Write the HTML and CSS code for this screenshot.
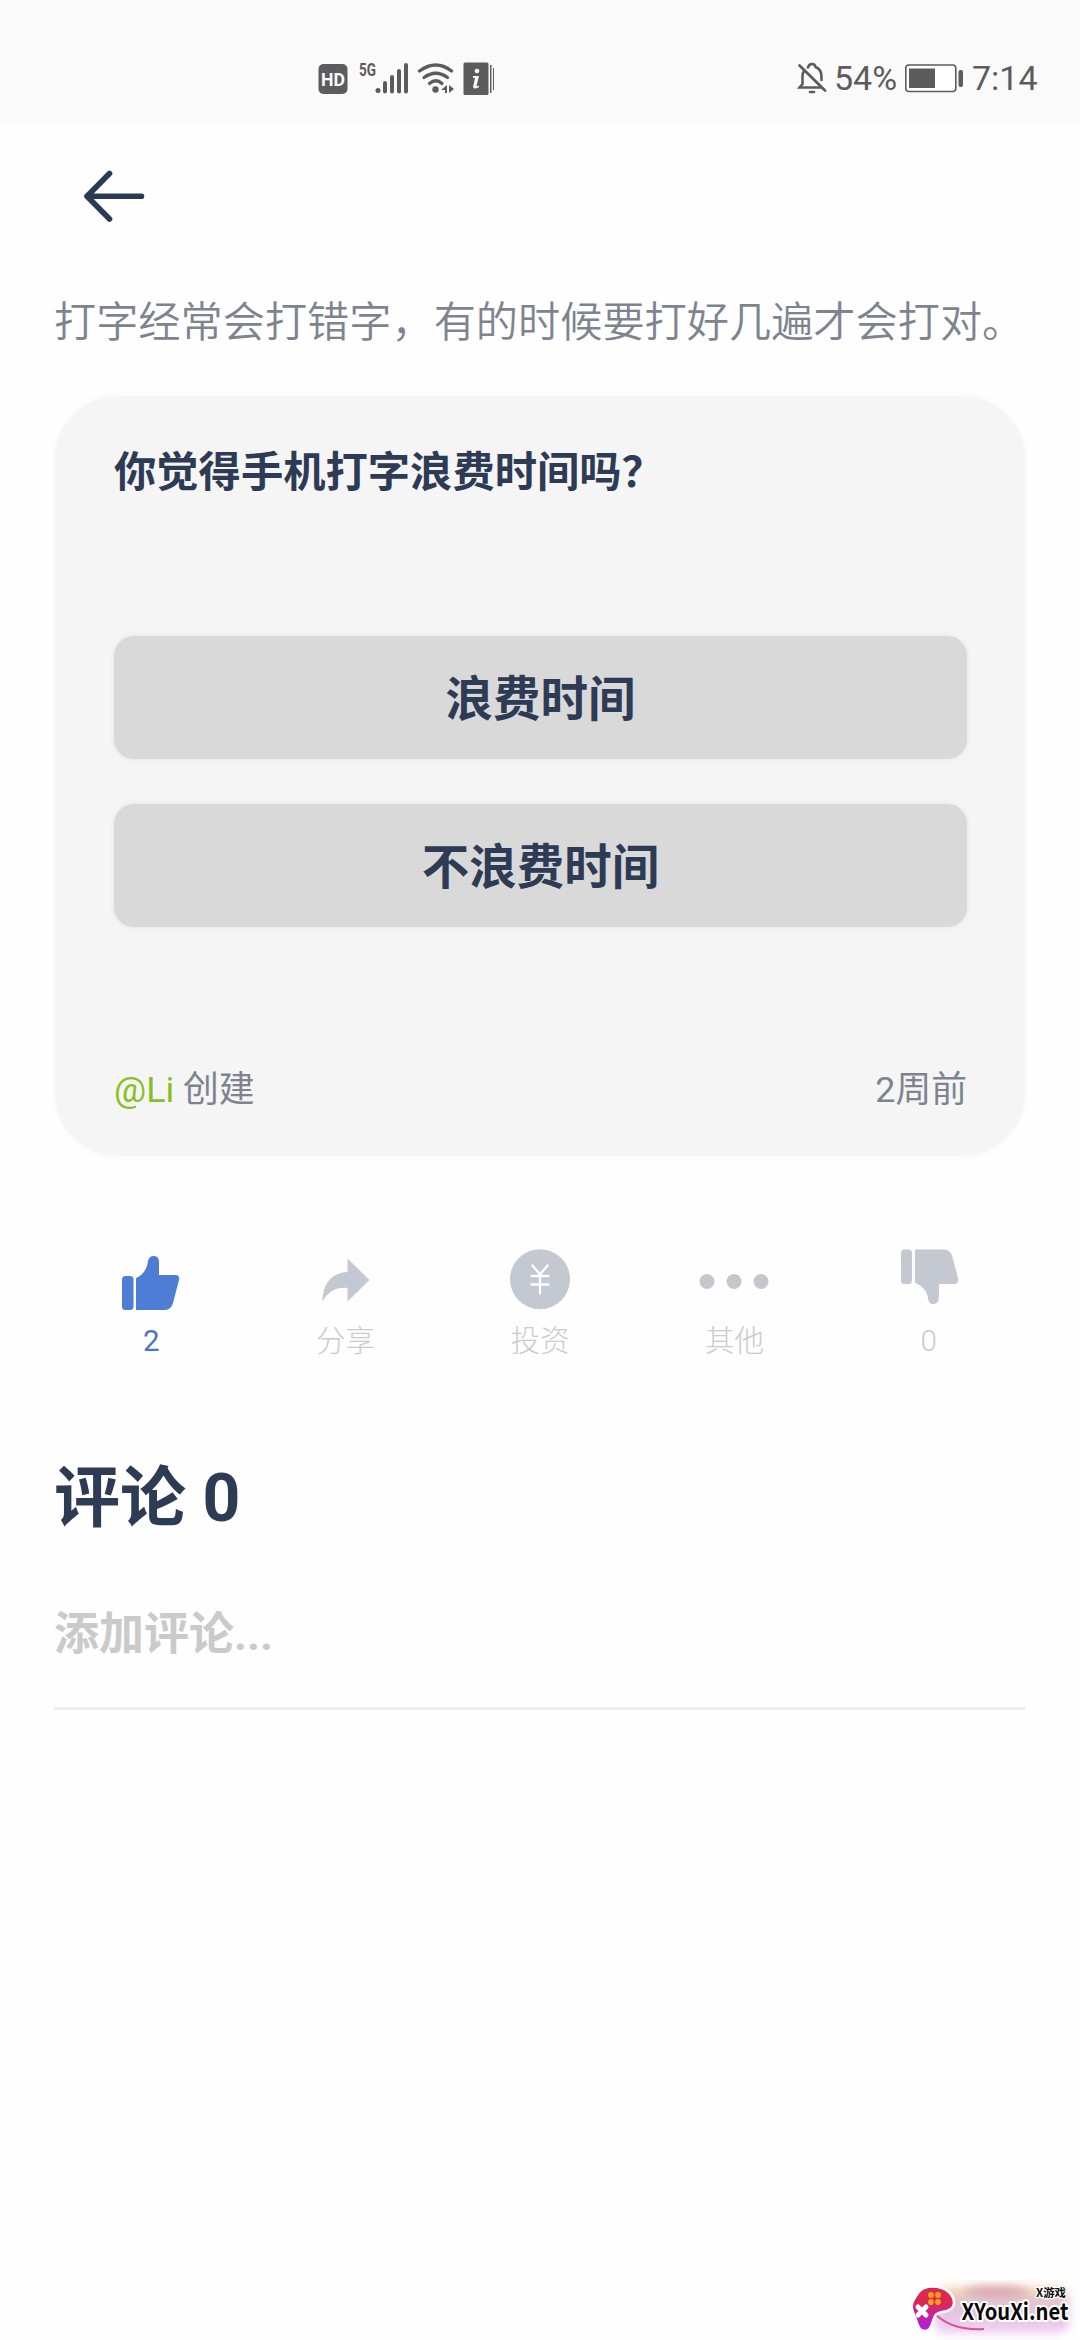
FILE: index.html
```html
<!DOCTYPE html>
<html lang="zh-CN">
<head>
<meta charset="utf-8">
<title>评论</title>
<link rel="stylesheet" href="styles.css">
</head>
<body>
<header class="status">
  <svg class="status-left" width="180" height="40" viewBox="316 58 180 40" fill="#5c5c5c">
    <rect x="318.500" y="64" width="29" height="30" rx="5"/>
    <text x="321" y="85.500" font-size="18" font-weight="700" fill="#fafafa" textLength="24" lengthAdjust="spacingAndGlyphs">HD</text>
    <text x="359" y="76" font-size="18" font-weight="700" textLength="17" lengthAdjust="spacingAndGlyphs">5G</text>
    <circle cx="378" cy="90.500" r="2.500"/>
    <rect x="383" y="81" width="4" height="12.500" rx="2"/>
    <rect x="390" y="75" width="4" height="18.500" rx="2"/>
    <rect x="397" y="69" width="4" height="24.500" rx="2"/>
    <rect x="404" y="63" width="4" height="30.500" rx="2"/>
    <g fill="none" stroke="#5c5c5c" stroke-width="3.200" stroke-linecap="round">
      <path d="M419.500 71Q436 59 451.500 71"/>
      <path d="M424 77.500Q436 69 447.500 77.500"/>
      <path d="M429.500 83.500Q436 78 442 83.500"/>
    </g>
    <circle cx="435.500" cy="89.500" r="3.200"/>
    <path d="M447 85v8h-2v-3h-4zM449 85l5 4-5 4z"/>
    <rect x="463.500" y="62.500" width="25" height="32.500" rx="1.500"/>
    <path d="M490 65h1.500v28H490zM493 68h1v22h-1z"/>
    <circle cx="477" cy="71" r="2.300" fill="#fafafa"/>
    <path d="M473 76h6l-2.500 10q1 .5 2.500-.5v1.500q-5 3-6 0l2-9h-2z" fill="#fafafa"/>
  </svg>
  <div class="status-right">
    <svg width="30" height="34" viewBox="796 61 30 34" fill="none" stroke="#5c5c5c" stroke-width="2.600" stroke-linecap="round">
      <path d="M803 71q-1.500 2-1.500 5v8l-3 3.500h22M807 67.500q1-3.500 4-3.500t3.500 3q6 2 6 10v3"/>
      <path d="M798.500 65.500l25.500 25" stroke-width="2.800"/>
      <path d="M809 92h4"/>
    </svg>
    <span class="percent">54%</span>
    <svg width="60" height="30" viewBox="903 63 60 30">
      <rect x="904.800" y="65" width="50" height="26.500" rx="3" fill="#fff" stroke="#5c5c5c" stroke-width="1.600"/>
      <rect x="908" y="68.500" width="26" height="19.500" fill="#5c5c5c"/>
      <rect x="957.500" y="70" width="4.500" height="17" rx="2" fill="#5c5c5c"/>
    </svg>
    <span class="clock">7:14</span>
  </div>
</header>
<main class="page">
  <nav class="nav">
    <svg width="64" height="56" viewBox="82 168 64 56" fill="none" stroke="#2b3a53" stroke-width="5.600" stroke-linecap="round" stroke-linejoin="round">
      <path d="M141.500 196.300H87M109.500 173.500L87 196.300l22.500 22.700"/>
    </svg>
  </nav>
  <p class="intro">打字经常会打错字，有的时候要打好几遍才会打对。</p>
  <section class="card">
    <h1 class="question">你觉得手机打字浪费时间吗？</h1>
    <div class="options">
      <button class="option">浪费时间</button>
      <button class="option">不浪费时间</button>
    </div>
    <footer class="meta"><span><span class="author">@Li</span> 创建</span><span>2周前</span></footer>
  </section>
  <section class="actions">
    <div class="action liked">
      <svg width="64" height="64" viewBox="119 1247 64 64" fill="#4e7dd6">
        <rect x="122" y="1276" width="11.500" height="34" rx="3.500"/>
        <path d="M136 1278c5-2 9.500-6 11.500-14 .6-5 2-8 6-8 3.500 0 5.500 2 5.500 6v13h16q5 0 4 5l-6 23q-2 7-8 7h-29z"/>
      </svg>
      <span>2</span>
    </div>
    <div class="action">
      <svg width="64" height="64" viewBox="313 1247 64 64" fill="#c3c8d1">
        <path d="M346.500 1258.500l22 21.500-22 21.500v-13.500c-11-1-19 3-25 13.500 0-17 9-29 25-29.500z"/>
      </svg>
      <span>分享</span>
    </div>
    <div class="action">
      <svg width="64" height="64" viewBox="507 1247 64 64">
        <circle cx="539" cy="1279.300" r="30" fill="#c3c8d1"/>
        <path d="M531.500 1265.500l7.500 9 7.500-9M530.500 1276h17M530.500 1284.500h17M539 1274v19.500" fill="none" stroke="#fff" stroke-width="2.300" stroke-linecap="round"/>
      </svg>
      <span>投资</span>
    </div>
    <div class="action">
      <svg width="76" height="64" viewBox="695 1247 76 64" fill="#c5c7cc">
        <circle cx="706" cy="1281.500" r="7.500"/><circle cx="733" cy="1281.500" r="7.500"/><circle cx="760" cy="1281.500" r="7.500"/>
      </svg>
      <span>其他</span>
    </div>
    <div class="action">
      <svg width="64" height="64" viewBox="895 1247 64 64" fill="#c3c8d1">
        <rect x="899" y="1249.500" width="11" height="34.500" rx="3.500"/>
        <path d="M913 1249.500h29q6 0 8 6l6 22.500q1 6-4 6h-15v12c0 5-2 8-5.500 8s-5-2-5.500-6c-.7-7-6-12-13-15.500z"/>
      </svg>
      <span>0</span>
    </div>
  </section>
  <h2 class="comments">评论 0</h2>
  <div class="add">添加评论...</div>
</main>
<svg class="watermark" width="190" height="70" viewBox="0 0 190 70">
  <defs>
    <linearGradient id="pad" x1="0" y1="0" x2="0" y2="1"><stop offset=".35" stop-color="#dc2850"/><stop offset=".85" stop-color="#b620d0"/></linearGradient>
    <linearGradient id="glow" x1="0" y1="0" x2="0" y2="1"><stop offset="0" stop-color="#f3cd94"/><stop offset=".35" stop-color="#d9b5cf"/><stop offset="1" stop-color="#ecc0f2"/></linearGradient>
    <filter id="soft" x="-20%" y="-40%" width="140%" height="180%"><feGaussianBlur stdDeviation="4"/></filter>
  </defs>
  <rect x="45" y="17" width="134" height="46" rx="10" fill="url(#glow)" opacity=".8" filter="url(#soft)"/>
  <ellipse cx="106" cy="21" rx="32" ry="6" fill="#c57aa5" opacity=".5" filter="url(#soft)"/>
  <path d="M46 45q18 16 48 14" fill="none" stroke="#dc5090" stroke-width="2"/>
  <path d="M34 18q8-3 18 0c7 2 12 8 12 15 0 6-5 8-12 9-6 1-7 3-9 9-2 7-4 10-8 10-5 0-7-4-9-11-3-8-6-12-3-19 3-6 6-11 11-13z" fill="url(#pad)" stroke="#fff" stroke-width="2.500"/>
  <g fill="#ffa31a"><circle cx="41" cy="25" r="2.900"/><circle cx="48" cy="25" r="2.900"/><circle cx="41" cy="32" r="2.900"/><circle cx="48" cy="32" r="2.900"/></g>
  <path d="M28 37l8 8M36 37l-8 8" stroke="#fff" stroke-width="5" stroke-linecap="round"/>
  <g fill="#080808" stroke="#fff" paint-order="stroke" stroke-linejoin="round">
    <text class="brand" x="71.500" y="50" font-size="23" stroke-width="4" textLength="107" lengthAdjust="spacingAndGlyphs">XYouXi.net</text>
    <text class="brand" x="146" y="26.500" font-size="11" stroke-width="2.500" textLength="30" lengthAdjust="spacingAndGlyphs">X游戏</text>
  </g>
</svg>
</body>
</html>
```
FILE: styles.css
```css
* { box-sizing: border-box; }
body {
  margin: 0;
  height: 2340px;
  position: relative;
  overflow: hidden;
  background: #fefefe;
  color: #2d3b55;
  font-family: Roboto, "Noto Sans CJK SC", sans-serif;
}
svg { display: block; flex: none; }
.status {
  height: 124px;
  padding: 32px 43px 0 316px;
  background: #fafafa;
  color: #5c5c5c;
  display: flex;
  justify-content: space-between;
  align-items: center;
}
.status-right { display: flex; align-items: center; font-size: 34px; line-height: 40px; }
.percent { width: 70px; margin-left: 7px; }
.clock { width: 65px; margin-left: 8px; white-space: nowrap; }
.page { padding: 0 55px 0 54px; }
.nav { height: 144px; padding: 44px 28px 0; }
.intro { margin: 20px 0 0; height: 108px; font-size: 42.2px; line-height: 62px; color: #7d8490; white-space: nowrap; font-family: "Noto Sans CJK SC", sans-serif; font-weight: 350; }
.card {
  height: 760px;
  margin-left: 1px;
  padding: 42px 58px 0 59px;
  background: #f5f5f5;
  border-radius: 64px;
  box-shadow: 0 0 6px #f5f5f5;
  display: flex;
  flex-direction: column;
}
.question { margin: 0; height: 198px; font-size: 42.3px; line-height: 62px; font-weight: 700; white-space: nowrap; font-family: "Noto Sans CJK SC", sans-serif; }
.options { display: grid; gap: 45px; }
.option {
  height: 123px;
  padding: 0 0 3px;
  border: 0;
  border-radius: 20px;
  background: #d9d9d9;
  box-shadow: 0 0 5px #e3e3e3;
  color: inherit;
  font: 700 47.5px/60px "Noto Sans CJK SC", sans-serif;
}
.meta { margin-top: 137px; display: flex; justify-content: space-between; font-size: 35.800px; line-height: 52px; color: #7d8490; }
.author { color: #8abf22; }
.actions { width: 972px; margin-top: 91px; display: grid; grid-template-columns: repeat(5, 1fr); }
.action { display: flex; flex-direction: column; align-items: center; gap: 10px; color: #cbcbcd; font-size: 29.500px; line-height: 40px; font-weight: 300; }
.liked { color: #4e75bd; font-weight: 400; }
.comments { margin: 90px 0 0; font-size: 66px; line-height: 96px; font-weight: 700; }
.add { width: 971px; margin-top: 60px; height: 103px; border-bottom: 3px solid #ededed; color: #cacaca; font-size: 45px; line-height: 56px; font-weight: 700; }
.watermark { position: absolute; left: 890px; top: 2270px; }
.brand { font-family: "Noto Sans CJK SC", sans-serif; font-weight: 700; }
```
